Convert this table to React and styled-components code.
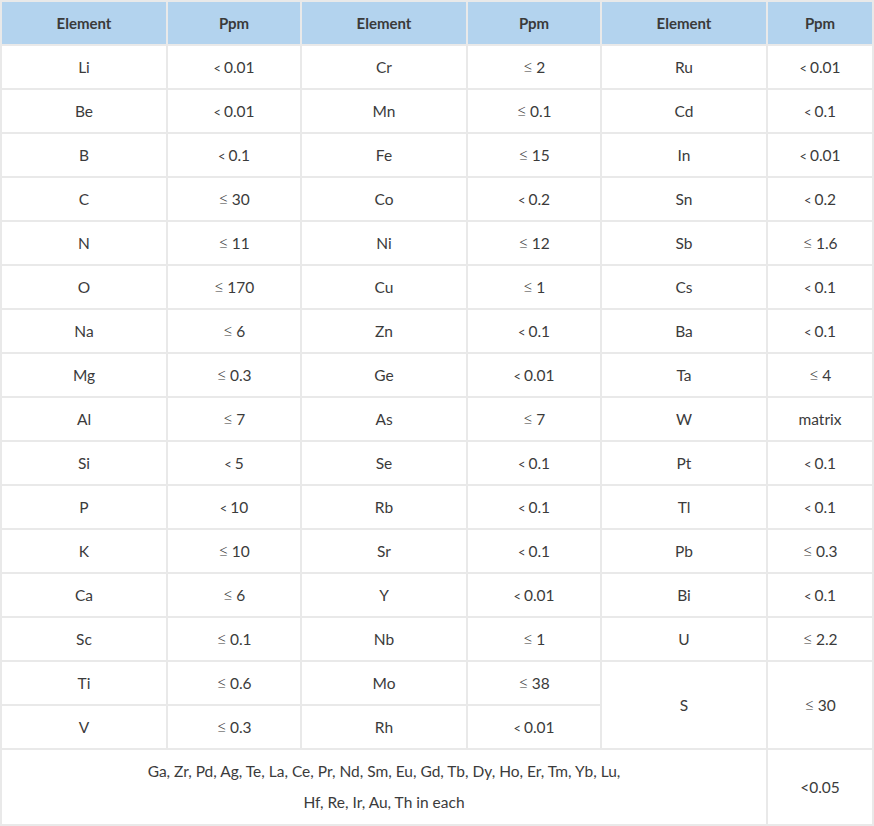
import React from "react";
import styled, { createGlobalStyle } from "styled-components";

const GlobalStyle = createGlobalStyle`
  html, body {
    margin: 0;
    padding: 0;
    background: #fff;
  }
  body {
    font-family: Lato, "Open Sans", "Liberation Sans", sans-serif;
    color: #3b3b3b;
  }
`;

const Table = styled.table`
  width: 874px;
  table-layout: fixed;
  border-collapse: separate;
  border-spacing: 0;
  border-left: 2px solid #e9e9e9;
  border-top: 2px solid #e9e9e9;
  font-size: 15.5px;
`;

const HeadCell = styled.th`
  height: 42px;
  padding: 0;
  background: #b3d3ee;
  border-right: 2px solid #e9e9e9;
  border-bottom: 2px solid #e9e9e9;
  font-weight: 700;
  font-size: 15px;
  text-align: center;
  color: #3a3a3a;
`;

const Cell = styled.td`
  height: ${(p) => (p.rowSpan > 1 ? 86 : 42)}px;
  padding: 0 6px;
  border-right: 2px solid #e9e9e9;
  border-bottom: 2px solid #e9e9e9;
  text-align: center;
  vertical-align: middle;
  line-height: 30px;
`;

const NoteCell = styled(Cell)`
  height: 74px;
  padding: 0;
  line-height: 31px;
`;

const Sym = styled.span`
  font-size: ${(p) => (p.$lt ? 13 : 18)}px;
  font-weight: ${(p) => (p.$lt ? 400 : 300)};
  margin-right: ${(p) => (p.$lt ? 3 : 3)}px;
  line-height: 1;
`;

const widths = [166, 134, 166, 134, 166, 106];

const rows = [
  ["Li", "< 0.01", "Cr", "≤ 2", "Ru", "< 0.01"],
  ["Be", "< 0.01", "Mn", "≤ 0.1", "Cd", "< 0.1"],
  ["B", "< 0.1", "Fe", "≤ 15", "In", "< 0.01"],
  ["C", "≤ 30", "Co", "< 0.2", "Sn", "< 0.2"],
  ["N", "≤ 11", "Ni", "≤ 12", "Sb", "≤ 1.6"],
  ["O", "≤ 170", "Cu", "≤ 1", "Cs", "< 0.1"],
  ["Na", "≤ 6", "Zn", "< 0.1", "Ba", "< 0.1"],
  ["Mg", "≤ 0.3", "Ge", "< 0.01", "Ta", "≤ 4"],
  ["Al", "≤ 7", "As", "≤ 7", "W", "matrix"],
  ["Si", "< 5", "Se", "< 0.1", "Pt", "< 0.1"],
  ["P", "< 10", "Rb", "< 0.1", "Tl", "< 0.1"],
  ["K", "≤ 10", "Sr", "< 0.1", "Pb", "≤ 0.3"],
  ["Ca", "≤ 6", "Y", "< 0.01", "Bi", "< 0.1"],
  ["Sc", "≤ 0.1", "Nb", "≤ 1", "U", "≤ 2.2"],
  ["Ti", "≤ 0.6", "Mo", "≤ 38", "S", "≤ 30"],
  ["V", "≤ 0.3", "Rh", "< 0.01"],
];

const Value = ({ text }) => {
  const m = text.match(/^([<≤]) (.*)$/);
  if (!m) return text;
  return (
    <>
      <Sym $lt={m[1] === "<"}>{m[1]}</Sym>
      {m[2]}
    </>
  );
};

export default function App() {
  return (
    <>
      <GlobalStyle />
      <Table>
        <colgroup>
          {widths.map((w, i) => (
            <col key={i} style={{ width: w }} />
          ))}
        </colgroup>
        <thead>
          <tr>
            {["Element", "Ppm", "Element", "Ppm", "Element", "Ppm"].map((h, i) => (
              <HeadCell key={i}>{h}</HeadCell>
            ))}
          </tr>
        </thead>
        <tbody>
          {rows.map((r, i) => (
            <tr key={i}>
              {r.map((c, j) =>
                i === 14 && j >= 4 ? (
                  <Cell key={j} rowSpan={2}>
                    {j % 2 ? <Value text={c} /> : c}
                  </Cell>
                ) : (
                  <Cell key={j}>{j % 2 ? <Value text={c} /> : c}</Cell>
                )
              )}
            </tr>
          ))}
          <tr>
            <NoteCell colSpan={5}>
              Ga, Zr, Pd, Ag, Te, La, Ce, Pr, Nd, Sm, Eu, Gd, Tb, Dy, Ho, Er, Tm, Yb, Lu,
              <br />
              Hf, Re, Ir, Au, Th in each
            </NoteCell>
            <NoteCell>&lt;0.05</NoteCell>
          </tr>
        </tbody>
      </Table>
    </>
  );
}
